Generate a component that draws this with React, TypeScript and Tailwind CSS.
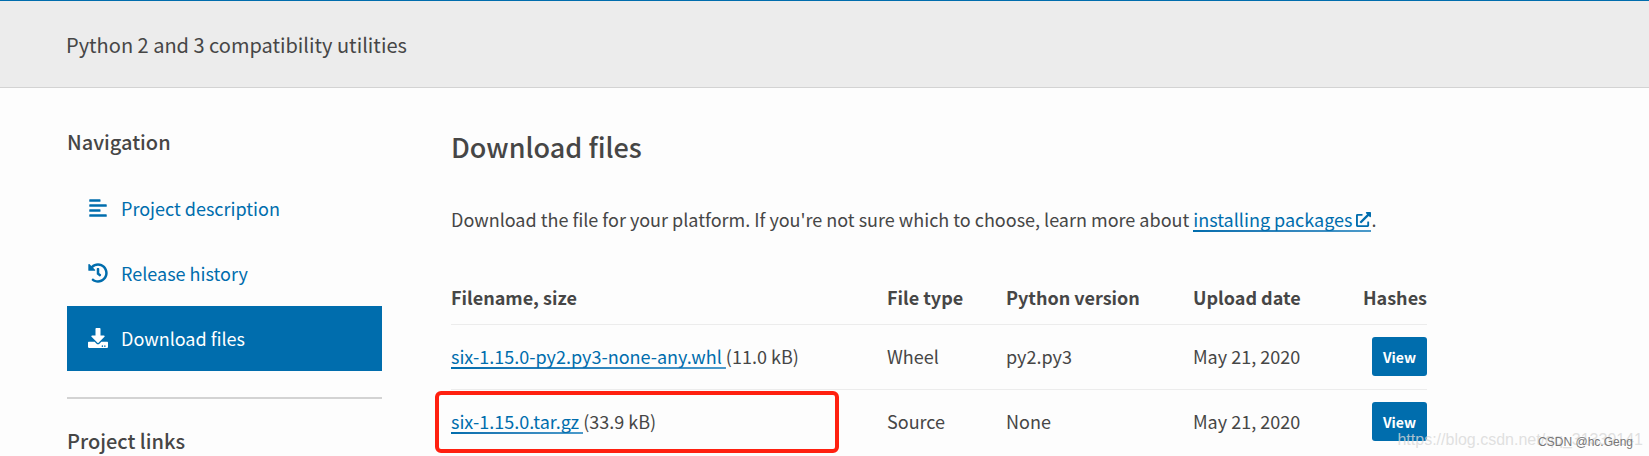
import type { ReactNode } from 'react';
import { FaAlignLeft, FaDownload, FaHistory, FaExternalLinkAlt } from 'react-icons/fa';

interface NavItem {
  name: string;
  href: string;
  icon: React.ElementType;
  active?: boolean;
}

interface ReleaseFile {
  name: string;
  size: string;
  type: string;
  version: string;
  date: string;
  highlighted?: boolean;
}

const navItems: NavItem[] = [
  { name: 'Project description', href: '#description', icon: FaAlignLeft },
  { name: 'Release history', href: '#history', icon: FaHistory },
  { name: 'Download files', href: '#files', icon: FaDownload, active: true },
];

const files: ReleaseFile[] = [
  { name: 'six-1.15.0-py2.py3-none-any.whl', size: '11.0 kB', type: 'Wheel', version: 'py2.py3', date: 'May 21, 2020' },
  { name: 'six-1.15.0.tar.gz', size: '33.9 kB', type: 'Source', version: 'None', date: 'May 21, 2020', highlighted: true },
];

// Link with a two pixel underline that fades to the right
function TextLink({ href, children }: { href: string; children: ReactNode }) {
  return (
    <a
      href={href}
      className="bg-linear-to-r from-[#006dad] to-[#4b9aca] bg-[length:100%_2px] bg-bottom bg-no-repeat text-[#006dad]"
    >
      {children}
    </a>
  );
}

function Sidebar() {
  return (
    <aside className="w-[315px] shrink-0 pt-10">
      <h2 className="text-xl leading-7 font-medium">Navigation</h2>
      <nav className="mt-5">
        {navItems.map((item) => {
          const Icon = item.icon;

          return (
            <a
              key={item.name}
              href={item.href}
              className={`flex h-[65px] items-center gap-[13px] px-[21px] pb-0.5 ${
                item.active ? 'bg-[#006dad] text-white' : 'text-[#006dad]'
              }`}
            >
              <Icon className="size-5" />
              {item.name}
            </a>
          );
        })}
      </nav>
      <hr className="mt-[26px] border-t-2 border-[#d3d3d3]" />
      <h2 className="mt-7 text-xl leading-7 font-medium">Project links</h2>
    </aside>
  );
}

function FilesTable() {
  return (
    <table className="mt-10 w-full table-fixed text-left">
      <thead>
        <tr className="h-[51px] border-b border-[#ececec] *:pb-[3px]">
          <th>Filename, size</th>
          <th className="w-[119px]">File type</th>
          <th className="w-[187px]">Python version</th>
          <th className="w-[150px]">Upload date</th>
          <th className="w-[84px] text-right">Hashes</th>
        </tr>
      </thead>
      <tbody>
        {files.map((file) => (
          <tr key={file.name} className="h-[65px] border-b border-[#ececec] last:border-b-0">
            <td className="relative pb-0.5">
              <TextLink href="#file">{file.name}&nbsp;</TextLink>({file.size})
              {file.highlighted && (
                <div className="absolute inset-y-px right-12 -left-4 rounded-md border-4 border-[#ff2010]" />
              )}
            </td>
            <td className="pb-0.5">{file.type}</td>
            <td className="pb-0.5">{file.version}</td>
            <td className="pb-0.5">{file.date}</td>
            <td className="text-right">
              <button type="button" className="h-[39px] rounded-[3px] bg-[#006dad] px-[11px] align-middle text-sm leading-5 font-bold text-white">
                View
              </button>
            </td>
          </tr>
        ))}
      </tbody>
    </table>
  );
}

export default function App() {
  return (
    <div className="relative h-screen overflow-hidden bg-[#fdfdfd] font-['Noto_Sans_CJK_SC',sans-serif] text-lg leading-7 text-[#464646]">
      {/* Project summary banner */}
      <header className="border-t border-b border-t-[#006dad] border-b-[#d3d3d3] bg-[#ececec] pt-[30px] pr-8 pb-7 pl-[66px]">
        <p className="text-xl leading-7">Python 2 and 3 compatibility utilities</p>
      </header>

      <div className="flex max-w-[1427px] gap-[69px] pl-[67px]">
        <Sidebar />
        <main className="min-w-0 flex-1 pt-[39px]">
          <h1 className="text-[27px] leading-10 font-medium">Download files</h1>
          <p className="mt-[38px]">
            Download the file for your platform. If you're not sure which to choose, learn more about{' '}
            <TextLink href="#packages">
              installing packages <FaExternalLinkAlt className="inline size-[15px] align-baseline" />
            </TextLink>
            .
          </p>
          <FilesTable />
        </main>
      </div>

      {/* Watermarks */}
      <span className="absolute right-1.5 bottom-1 font-['Liberation_Sans',sans-serif] text-base text-[#d8d8d8]/80">
        https://blog.csdn.net/qq_31339141
      </span>
      <span className="absolute right-4 bottom-1.5 font-['Liberation_Sans',sans-serif] text-xs text-[#777]">
        CSDN @hc.Geng
      </span>
    </div>
  );
}
